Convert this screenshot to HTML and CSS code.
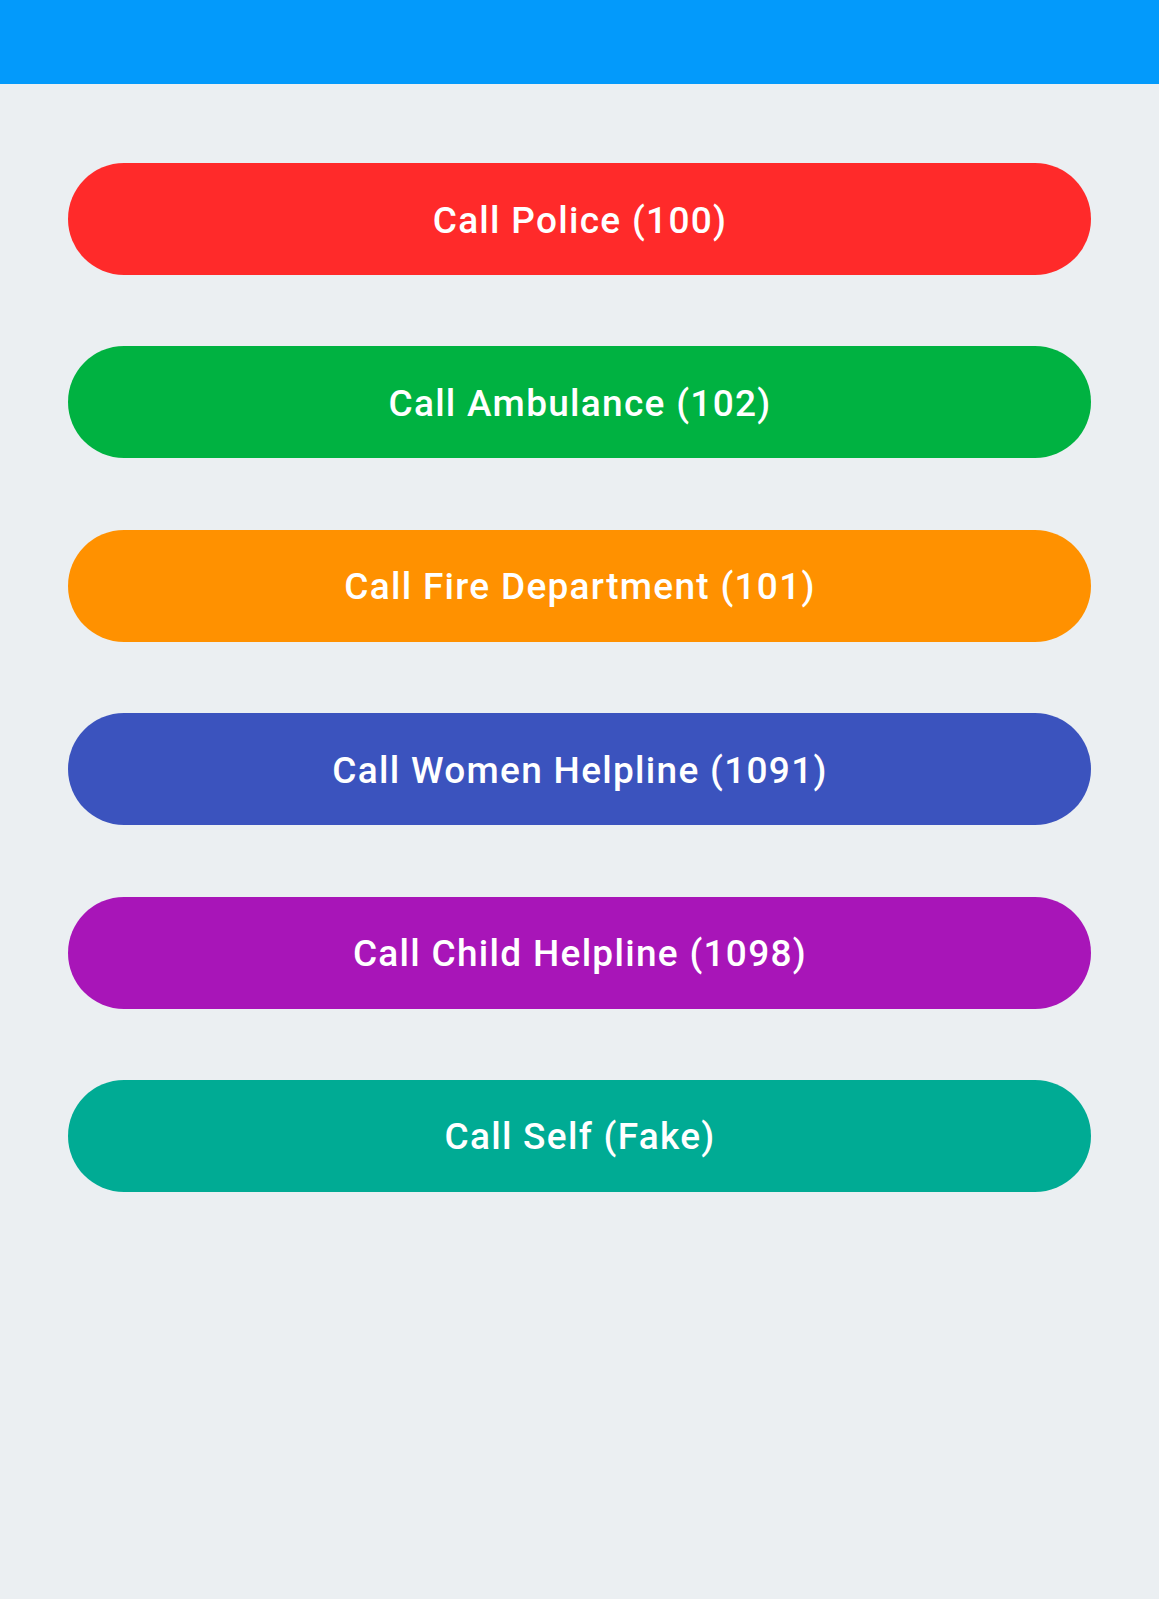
FILE: index.html
```html
<!DOCTYPE html>
<html>
<head>
<meta charset="utf-8">
<link rel="stylesheet" href="styles.css">
</head>
<body>
<header class="topbar"></header>
<main class="list">
  <button class="btn police">Call Police (100)</button>
  <button class="btn ambulance">Call Ambulance (102)</button>
  <button class="btn fire">Call Fire Department (101)</button>
  <button class="btn women">Call Women Helpline (1091)</button>
  <button class="btn child">Call Child Helpline (1098)</button>
  <button class="btn self">Call Self (Fake)</button>
</main>
</body>
</html>
```
FILE: styles.css
```css
html, body {
  margin: 0;
  padding: 0;
  background: #ebeff2;
  font-family: Roboto, "Noto Sans", sans-serif;
  height: 100%;
}
.topbar {
  height: 84px;
  background: #039afb;
}
.list {
  display: flex;
  flex-direction: column;
  gap: 71.4px;
  padding: 79px 68px 0 68px;
}
.btn {
  height: 112px;
  border: none;
  border-radius: 56px;
  color: #ffffff;
  font-family: Roboto, "Noto Sans", sans-serif;
  font-size: 37px;
  font-weight: 500;
  letter-spacing: 1.3px;
  display: flex;
  align-items: center;
  justify-content: center;
  padding: 2px 0 0 1px;
}
.police { background: #ff2a2a; }
.ambulance { background: #00b241; }
.fire { background: #ff9100; }
.women { background: #3b53be; }
.child { background: #a815b8; }
.self { background: #00ab94; }
```
